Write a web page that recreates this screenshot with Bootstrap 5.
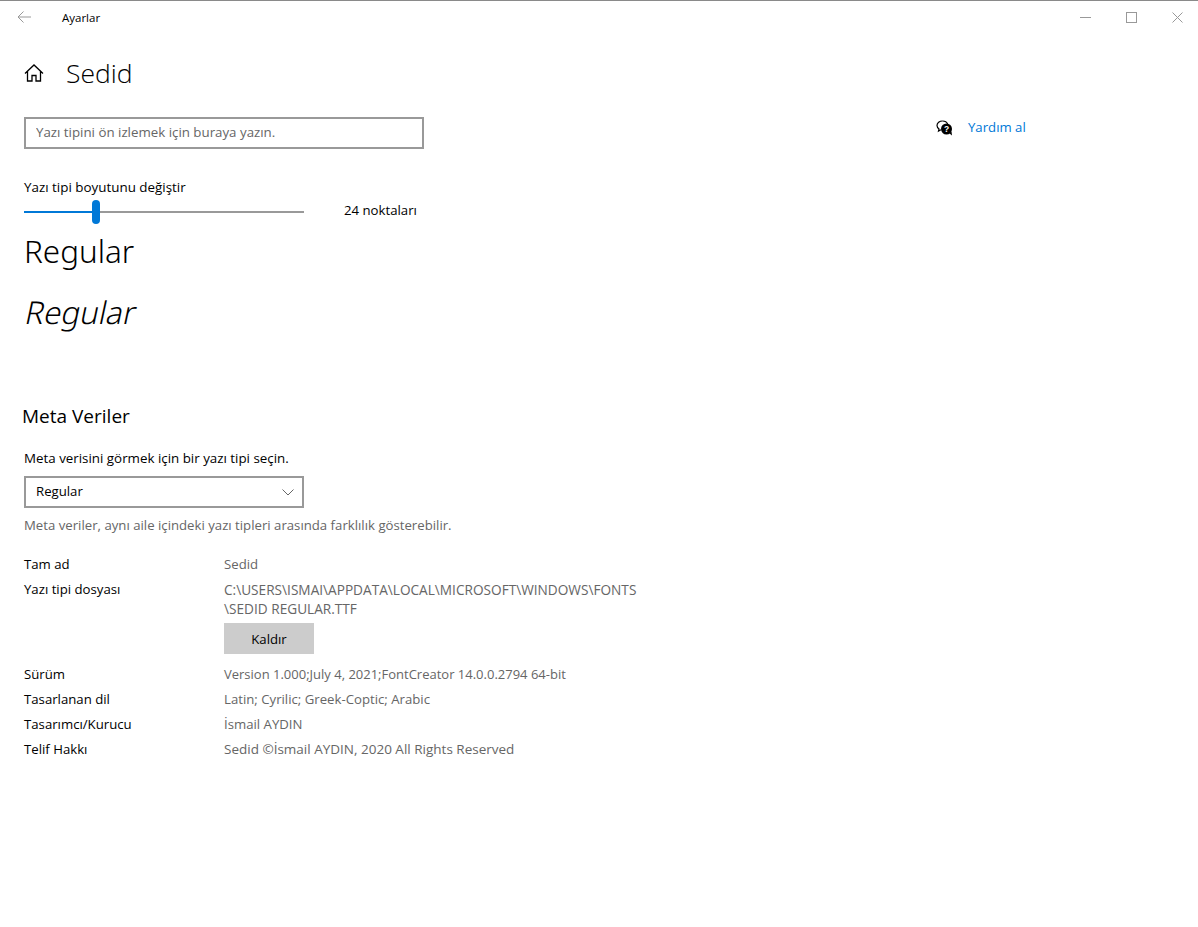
<!DOCTYPE html>
<html lang="tr">
<head>
  <meta charset="UTF-8" />
  <meta name="viewport" content="width=device-width, initial-scale=1.0" />
  <title>Ayarlar</title>
  <link href="https://cdn.jsdelivr.net/npm/bootstrap@5.3.0/dist/css/bootstrap.min.css" rel="stylesheet" />
  <style>
    html, body { height: 100%; }
    body {
      font-family: "Open Sans", "Noto Sans", sans-serif;
      font-size: 13.2px;
      line-height: 19px;
      color: #000;
      background: #fff;
      border-top: 1px solid #8a8a8a;
      overflow: hidden;
    }
    .win-bar { height: 32px; }
    .back-slot { width: 48px; padding-left: 17px; }
    .win-title { padding-left: 14px; font-size: 11.5px; }
    .win-btns { margin-right: -2px; }
    .win-btn { width: 46px; height: 32px; }
    .page-wrap { padding-left: 24px; }
    .page-head { height: 34px; margin-top: 23px; }
    .page-title { font-size: 26.500px; font-weight: 300; line-height: 34px; margin: 0 0 0 22px; }
    .main-col { width: 640px; }
    .help-col { padding-left: 272px; padding-top: 4px; }
    .help-link { color: #0078d7; margin-left: 15px; text-decoration: none; }
    .preview-input {
      width: 400px; height: 32px; margin-top: 3px;
      border: 2px solid #999; border-radius: 0;
      padding: 0 10px 2px; font-size: 13.300px; color: #000;
      font-family: inherit;
    }
    .preview-input::placeholder { color: #666; opacity: 1; }
    .size-label { margin-top: 29px; font-size: 13.400px; }
    .slider-row { height: 24px; margin-top: 3px; }
    .slider-track { width: 280px; height: 24px; position: relative; }
    .track-line { position: absolute; top: 11px; height: 2px; }
    .track-on { left: 0; width: 72px; background: #0078d7; }
    .track-off { left: 72px; width: 208px; background: #999; }
    .track-thumb { position: absolute; left: 68px; top: 0; width: 8px; height: 24px; border-radius: 4px; background: #0078d7; }
    .size-value { margin-left: 40px; margin-top: -4px; }
    .sample { font-family: "Noto Sans", sans-serif; font-size: 31.400px; font-weight: 300; line-height: 40px; color: #000; }
    .sample-reg { margin-top: 7px; }
    .sample-ita { margin-top: 21px; }
    .sample-ita span { display: inline-block; transform: skewX(-12deg); transform-origin: 0 75%; }
    .meta-title { font-size: 19px; line-height: 26px; margin: 71px 0 0 -2px; font-weight: 400; }
    .meta-hint { margin-top: 20px; font-size: 13.350px; }
    .face-select {
      width: 280px; height: 32px; margin-top: 8px;
      border: 2px solid #999; padding: 0 8px 0 10px;
    }
    .face-name { margin-top: -2px; }
    .muted-line { color: #666; }
    .select-note { margin-top: 8px; }
    .meta-table { margin-top: 20px; }
    .meta-row { display: flex; margin-bottom: 6px; }
    .meta-key { width: 200px; flex: none; }
    .meta-val { color: #666; width: 430px; }
    .path-val { font-size: 13.650px; }
    .ver-val { font-size: 13px; }
    .copy-val { font-size: 13.500px; }
    .remove-btn {
      display: block; width: 90px; height: 31px; padding: 1px 0 0; margin: 5px 0 5px;
      background: #ccc; border: 0; border-radius: 0; font-size: 13.200px; color: #000;
    }
  </style>
</head>
<body>

<!-- Title bar -->
<div class="win-bar d-flex align-items-center">
  <div class="back-slot d-flex align-items-center">
    <svg width="14" height="12" viewBox="0 0 14 12" fill="none" stroke="#999" stroke-width="1"><path d="M6.500 .5 1 6l5.500 5.500M1 6h13"/></svg>
  </div>
  <div class="win-title">Ayarlar</div>
  <div class="win-btns ms-auto d-flex">
    <div class="win-btn d-flex align-items-center justify-content-center">
      <svg width="11" height="11" viewBox="0 0 11 11" stroke="#999"><path d="M0 5.500h11"/></svg>
    </div>
    <div class="win-btn d-flex align-items-center justify-content-center">
      <svg width="11" height="11" viewBox="0 0 11 11" fill="none" stroke="#999"><rect x=".5" y=".5" width="10" height="10"/></svg>
    </div>
    <div class="win-btn d-flex align-items-center justify-content-center">
      <svg width="11" height="11" viewBox="0 0 11 11" stroke="#999"><path d="M.5.5l10 10M10.500.5l-10 10"/></svg>
    </div>
  </div>
</div>

<div class="page-wrap">
  <!-- Heading -->
  <div class="page-head d-flex align-items-center">
    <svg width="20" height="18" viewBox="0 0 20 18" fill="none" stroke="#000" stroke-width="1.300"><path d="M1 9.500 10 1l9 8.500M3.500 7.500V17h4.500v-5.500h4V17h4.500V7.500"/></svg>
    <h1 class="page-title">Sedid</h1>
  </div>

  <div class="d-flex mt-4">
    <div class="main-col">
      <input class="preview-input d-block" type="text" placeholder="Yazı tipini ön izlemek için buraya yazın." />

      <div class="size-label">Yazı tipi boyutunu değiştir</div>
      <div class="slider-row d-flex align-items-center">
        <div class="slider-track">
          <div class="track-line track-on"></div>
          <div class="track-line track-off"></div>
          <div class="track-thumb"></div>
        </div>
        <div class="size-value">24 noktaları</div>
      </div>

      <div class="sample sample-reg">Regular</div>
      <div class="sample sample-ita"><span>Regular</span></div>

      <h2 class="meta-title">Meta Veriler</h2>
      <div class="meta-hint">Meta verisini görmek için bir yazı tipi seçin.</div>
      <div class="face-select d-flex align-items-center justify-content-between">
        <span class="face-name">Regular</span>
        <svg width="12" height="7" viewBox="0 0 12 7" fill="none" stroke="#666"><path d="M.5.500l5.500 5.500 5.500-5.500"/></svg>
      </div>
      <div class="muted-line select-note">Meta veriler, aynı aile içindeki yazı tipleri arasında farklılık gösterebilir.</div>

      <div class="meta-table">
        <div class="meta-row"><div class="meta-key">Tam ad</div><div class="meta-val">Sedid</div></div>
        <div class="meta-row">
          <div class="meta-key">Yazı tipi dosyası</div>
          <div class="meta-val">
            <div class="path-val">C:\USERS\ISMAI\APPDATA\LOCAL\MICROSOFT\WINDOWS\FONTS<br>\SEDID REGULAR.TTF</div>
            <button class="remove-btn" type="button">Kaldır</button>
          </div>
        </div>
        <div class="meta-row"><div class="meta-key">Sürüm</div><div class="meta-val ver-val">Version 1.000;July 4, 2021;FontCreator 14.0.0.2794 64-bit</div></div>
        <div class="meta-row"><div class="meta-key">Tasarlanan dil</div><div class="meta-val">Latin; Cyrilic; Greek-Coptic; Arabic</div></div>
        <div class="meta-row"><div class="meta-key">Tasarımcı/Kurucu</div><div class="meta-val">İsmail AYDIN</div></div>
        <div class="meta-row"><div class="meta-key">Telif Hakkı</div><div class="meta-val copy-val">Sedid ©İsmail AYDIN, 2020 All Rights Reserved</div></div>
      </div>
    </div>

    <div class="help-col">
      <div class="d-flex align-items-center">
        <svg width="17" height="16" viewBox="0 0 17 16"><path d="M6.500 1C3.500 1 1 3 1 5.500c0 1.400.8 2.600 2 3.400L2.500 11l2.500-1.300" fill="none" stroke="#000" stroke-width="1.200"/><path d="M6.500 1c2.500 0 4.500 1.300 5.200 3" fill="none" stroke="#000" stroke-width="1.200"/><circle cx="10.500" cy="9" r="5.500" fill="#000"/><path d="M13 13l3 2.500-.5-4z" fill="#000"/><text x="10.500" y="12" font-size="8.500" font-weight="700" text-anchor="middle" fill="#fff" font-family="Liberation Sans, sans-serif">?</text></svg>
        <a class="help-link" href="#">Yardım al</a>
      </div>
    </div>
  </div>
</div>

</body>
</html>
